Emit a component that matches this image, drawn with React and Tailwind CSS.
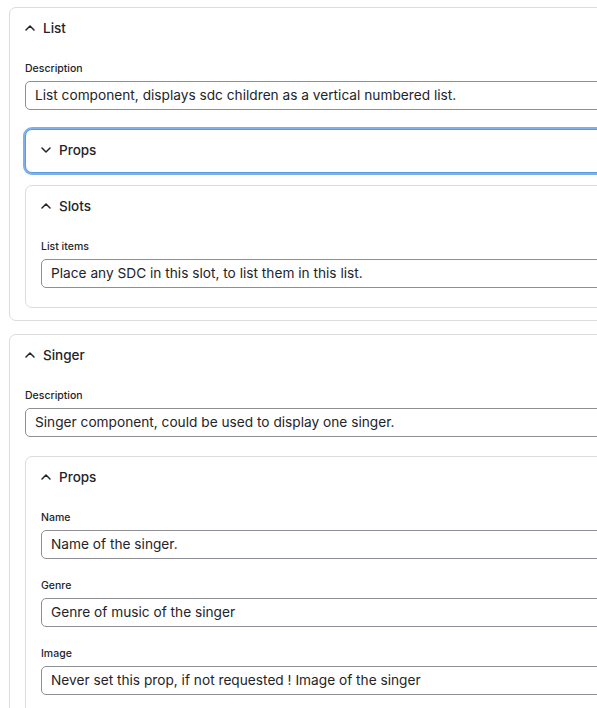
import clsx from "clsx";

function Chevron({ up }) {
  return (
    <svg width="10" height="10" viewBox="0 0 10 10" className="shrink-0" fill="none">
      <path
        d={up ? "M1 7 L5 3 L9 7" : "M1 3 L5 7 L9 3"}
        stroke="#232429"
        strokeWidth="1.5"
        strokeLinecap="round"
        strokeLinejoin="round"
      />
    </svg>
  );
}

function Card({ title, open = true, focused = false, nested = false, children }) {
  return (
    <div
      className={clsx(
        "rounded-[7px] bg-white",
        nested && "mb-[12px]",
        focused
          ? "border border-[#5b9be0] shadow-[0_0_0_2px_#7fb0ea]"
          : "border border-[#dcdcdc]"
      )}
    >
      <div className="flex h-[42px] items-center gap-[8px] px-[15px] pb-[2px] text-[13.5px] font-medium text-[#232429]">
        <Chevron up={open} />
        <span>{title}</span>
      </div>
      {open && <div className="px-[15px] pt-[11px]">{children}</div>}
    </div>
  );
}

function Field({ label, value }) {
  return (
    <div className="mb-[19px]">
      <div className="mb-[4px] text-[10.5px] font-medium leading-[16px] text-[#232429]">{label}</div>
      <div className="flex h-[29px] items-center rounded-[5px] border border-[#8f9096] bg-white pl-[9px] text-[13.7px] text-[#232429] whitespace-nowrap">
        {value}
      </div>
    </div>
  );
}

export default function App() {
  return (
    <div
      className="h-[708px] w-[597px] overflow-hidden bg-white"
      style={{ fontFamily: "Inter, 'Noto Sans', sans-serif" }}
    >
      <div className="flex w-[720px] flex-col gap-[13px] pl-[9px] pt-[7px]">
        <Card title="List">
          <Field
            label="Description"
            value="List component, displays sdc children as a vertical numbered list."
          />
          <Card title="Props" open={false} focused nested />
          <Card title="Slots" nested>
            <Field
              label="List items"
              value="Place any SDC in this slot, to list them in this list."
            />
          </Card>
        </Card>
        <Card title="Singer">
          <Field
            label="Description"
            value="Singer component, could be used to display one singer."
          />
          <Card title="Props" nested>
            <Field label="Name" value="Name of the singer." />
            <Field label="Genre" value="Genre of music of the singer" />
            <Field
              label="Image"
              value="Never set this prop, if not requested ! Image of the singer"
            />
          </Card>
        </Card>
      </div>
    </div>
  );
}
